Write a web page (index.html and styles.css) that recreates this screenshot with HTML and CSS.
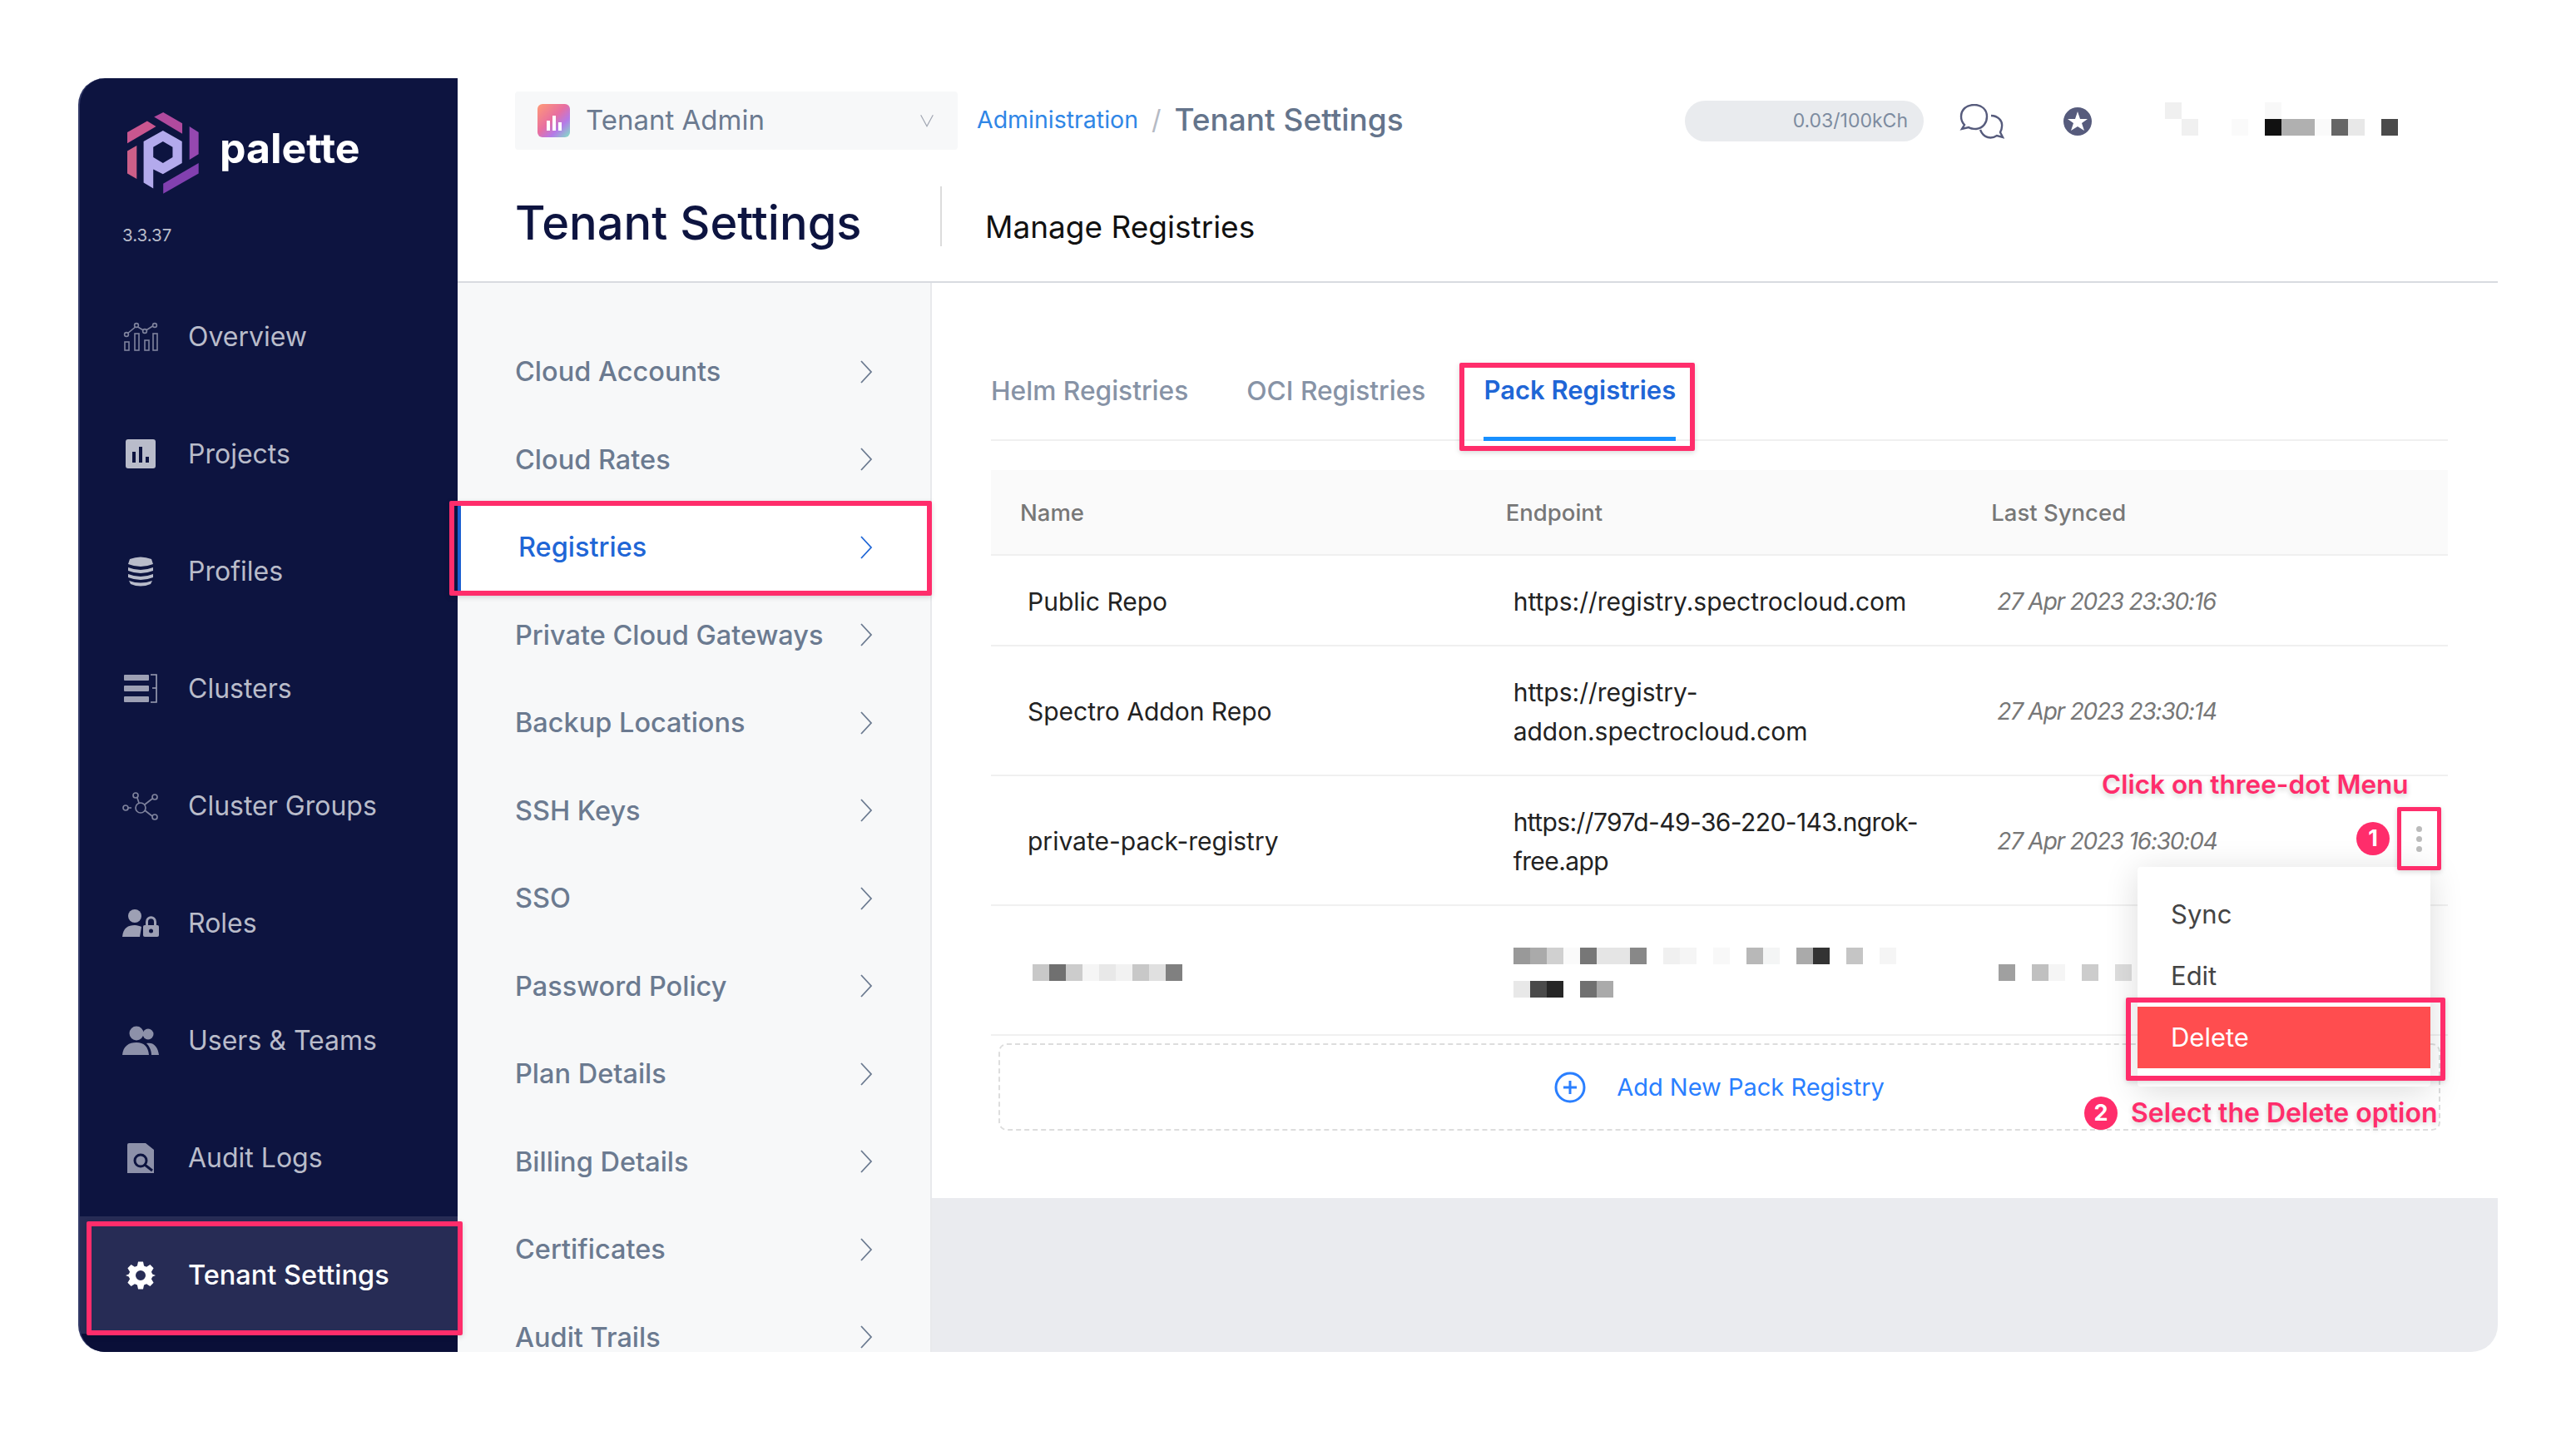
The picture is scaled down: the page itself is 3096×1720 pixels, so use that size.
FILE: index.html
```html
<!DOCTYPE html>
<html lang="en">
  <head>
    <meta charset="utf-8" />
    <title>Tenant Settings - Palette</title>
    <link rel="stylesheet" href="styles.css">
  </head>

  <body>
    <div class="frame">
      <aside class="sidebar">
        <div class="brand">
          <div class="brand-row">
            <svg class="logo" viewBox="215 135 265 265" preserveAspectRatio="none">
              <polygon fill="#b04a9e" points="315,155 348,140 417,175 417,208" />
              <polygon fill="#c9568f" points="218,203 290,168 322,185 218,238" />
              <polygon fill="#cc5f88" points="218,262 252,245 252,350 218,333" />
              <polygon fill="#9548b0" points="443,185 476,203 476,272 443,290" />
              <polygon fill="#8240b0" points="348,365 476,300 476,333 348,397" />
              <path fill="#b3aaec" fill-rule="evenodd" d="M347 198 L416 232 L416 300 L347 335 L312 320 L312 380 L277 362 L277 232 Z M347 232 L312 250 L312 282 L347 300 L382 282 L382 250 Z" />
            </svg>
            <span class="brand-name">palette</span>
          </div>
          <div class="version">3.3.37</div>
        </div>

        <nav class="side-nav">
          <a class="side-item">
            <svg class="side-icon" viewBox="0 0 44 36" fill="none" stroke="#7f839d" stroke-width="1.6">
              <path d="M6 14 L17 5 L27 11 L38 4" />
              <circle cx="5" cy="15" r="2.4" fill="#0d1440" /><circle cx="17" cy="4" r="2.4" fill="#0d1440" /><circle cx="27" cy="11" r="2.4" fill="#0d1440" /><circle cx="39" cy="4" r="2.4" fill="#0d1440" />
              <rect x="3" y="24" width="5" height="10" /><rect x="15" y="14" width="5" height="20" /><rect x="27" y="22" width="5" height="12" /><rect x="37" y="14" width="5" height="20" />
            </svg>
            <span>Overview</span>
          </a>
          <a class="side-item">
            <svg class="side-icon" viewBox="0 0 44 36">
              <rect x="4" y="0" width="36" height="35" rx="3" fill="#b9bcca" />
              <rect x="12" y="15" width="4" height="13" fill="#0d1440" /><rect x="20" y="9" width="4" height="19" fill="#0d1440" /><rect x="28" y="21" width="4" height="7" fill="#0d1440" />
            </svg>
            <span>Projects</span>
          </a>
          <a class="side-item">
            <svg class="side-icon" viewBox="0 0 44 36" fill="#b9bcca">
              <path d="M9 3 Q22 -2 35 3 L37 9 Q22 15 7 9 Z" />
              <path d="M7 13 Q22 19 37 13 L37 17 Q22 23 7 17 Z" />
              <path d="M7 21 Q22 27 37 21 L37 25 Q22 31 7 25 Z" />
              <path d="M8 29 Q22 34 36 29 L34 33 Q22 38 10 33 Z" />
            </svg>
            <span>Profiles</span>
          </a>
          <a class="side-item">
            <svg class="side-icon" viewBox="0 0 44 36">
              <rect x="2" y="1" width="30" height="7" rx="1" fill="#9da0b4" /><rect x="2" y="14" width="30" height="7" rx="1" fill="#9da0b4" /><rect x="2" y="27" width="30" height="7" rx="1" fill="#9da0b4" />
              <path d="M34 1 H41 V34 H34 M36 17 H41" fill="none" stroke="#9da0b4" stroke-width="1.6" />
            </svg>
            <span>Clusters</span>
          </a>
          <a class="side-item">
            <svg class="side-icon" viewBox="0 0 44 36" fill="none" stroke="#7f839d" stroke-width="1.7">
              <circle cx="22" cy="20" r="6" /><circle cx="4" cy="20" r="3" /><circle cx="16" cy="5" r="3" /><circle cx="39" cy="7" r="3" /><circle cx="39" cy="31" r="3" />
              <path d="M7 20 H11 M18 8 L20 14 M27 16 L36 9 M27 23 L36 30" />
            </svg>
            <span>Cluster Groups</span>
          </a>
          <a class="side-item">
            <svg class="side-icon" viewBox="0 0 44 36" fill="#9da0b4">
              <circle cx="15" cy="9" r="8" />
              <path d="M0 34 C1 23 7 20 15 20 C18 20 21 21 23 22 L21 34 Z" />
              <path d="M29.500 20 V16 C29.500 9 39.500 9 39.500 16 V20" fill="none" stroke="#9da0b4" stroke-width="3" />
              <rect x="25" y="20" width="19" height="14" rx="2" />
              <circle cx="34.500" cy="27" r="2.500" fill="#0d1440" />
            </svg>
            <span>Roles</span>
          </a>
          <a class="side-item">
            <svg class="side-icon" viewBox="0 0 44 36" fill="#8d91a9">
              <circle cx="17" cy="9" r="8.500" /><circle cx="31" cy="10" r="6.500" />
              <path d="M0 35 C1 24 8 20 17 20 C26 20 31 25 32 35 Z" />
              <path d="M35 35 C35 29 32 24 29 21 C38 19 43 26 44 35 Z" />
            </svg>
            <span>Users &amp; Teams</span>
          </a>
          <a class="side-item">
            <svg class="side-icon" viewBox="0 0 44 36">
              <path fill="#8d91a9" d="M8 0 H28 L38 8 V36 H6 V2 Q6 0 8 0 Z" />
              <circle cx="22" cy="21" r="7" fill="none" stroke="#0d1440" stroke-width="3" />
              <path d="M27 26 L36 33" stroke="#0d1440" stroke-width="3" />
            </svg>
            <span>Audit Logs</span>
          </a>
          <a class="side-item active">
            <svg class="side-icon" viewBox="0 0 24 24" fill="#fff">
              <path fill-rule="evenodd" d="M10 1 H14 L14.700 4.300 L16.700 5.200 L19.600 3.400 L22.400 6.200 L20.600 9.100 L21.500 11 L24 12 L21.500 13 L20.600 14.900 L22.400 17.800 L19.600 20.600 L16.700 18.800 L14.700 19.700 L14 23 H10 L9.300 19.700 L7.300 18.800 L4.400 20.600 L1.600 17.800 L3.400 14.900 L2.500 13 L0 12 L2.500 11 L3.400 9.100 L1.600 6.200 L4.400 3.400 L7.300 5.200 L9.300 4.300 Z M12 8 A4 4 0 1 0 12 16 A4 4 0 1 0 12 8 Z" />
            </svg>
            <span>Tenant Settings</span>
          </a>
        </nav>
        <div class="side-foot"></div>
      </aside>

      <div class="main">
        <header class="header">
          <div class="topbar">
            <div class="tenant-select">
              <span class="tenant-icon"><i></i><i></i><i></i></span>
              <span class="tenant-name">Tenant Admin</span>
              <svg class="select-arrow" viewBox="0 0 24 24" fill="none" stroke="#a0a6b2" stroke-width="1.8"><path d="M1 2 L12 22 L23 2" /></svg>
            </div>
            <div class="crumbs">
              <span class="crumb-link">Administration</span>
              <span class="crumb-sep">/</span>
              <span class="crumb-here">Tenant Settings</span>
            </div>
            <div class="top-right">
              <div class="usage">0.03/100kCh</div>
              <svg class="chat-icon" viewBox="0 0 54 42" fill="none" stroke="#565b7c" stroke-width="2.400">
                <path d="M18 1 C8 1 2 7 2 15 C2 19 4 23 6 25 L3 30 L11 28 C14 30 17 30 20 30 C29 29 33 22 33 15 C33 7 27 1 18 1 Z" />
                <path d="M38 14 C46 14 52 20 51 27 C51 30 50 32 49 34 L52 40 L45 38 C42 40 38 41 34 40 C30 39 27 36 25 31" />
              </svg>
              <svg class="star-icon" viewBox="0 0 34 34">
                <circle cx="17" cy="17" r="17" fill="#565b7c" />
                <polygon fill="#fff" points="17,5 20,14 29,14 22,19 25,28 17,23 9,28 12,19 5,14 14,14" />
              </svg>
              <svg class="mosaic-user" width="280" height="40">
                <rect x="0" y="0" width="20" height="20" fill="#f0f0f0" />
                <rect x="120" y="0" width="20" height="20" fill="#f8f8f8" />
                <rect x="20" y="20" width="20" height="20" fill="#f0f0f0" />
                <rect x="80" y="20" width="20" height="20" fill="#fafafa" />
                <rect x="120" y="20" width="20" height="20" fill="#111" />
                <rect x="140" y="20" width="40" height="20" fill="#b0b0b0" />
                <rect x="180" y="20" width="20" height="20" fill="#fafafa" />
                <rect x="200" y="20" width="20" height="20" fill="#666" />
                <rect x="220" y="20" width="20" height="20" fill="#e8e8e8" />
                <rect x="260" y="20" width="20" height="20" fill="#4a4a4a" />
              </svg>
            </div>
          </div>
          <div class="titlebar">
            <h1>Tenant Settings</h1>
            <h2>Manage Registries</h2>
          </div>
        </header>

        <div class="body">
          <nav class="sub-nav">
            <a class="sub-item">Cloud Accounts<svg class="chev" viewBox="0 0 16 28"><path d="M2 1 L14 14 L2 27" /></svg></a>
            <a class="sub-item">Cloud Rates<svg class="chev" viewBox="0 0 16 28"><path d="M2 1 L14 14 L2 27" /></svg></a>
            <a class="sub-item active">Registries<svg class="chev" viewBox="0 0 16 28"><path d="M2 1 L14 14 L2 27" /></svg></a>
            <a class="sub-item">Private Cloud Gateways<svg class="chev" viewBox="0 0 16 28"><path d="M2 1 L14 14 L2 27" /></svg></a>
            <a class="sub-item">Backup Locations<svg class="chev" viewBox="0 0 16 28"><path d="M2 1 L14 14 L2 27" /></svg></a>
            <a class="sub-item">SSH Keys<svg class="chev" viewBox="0 0 16 28"><path d="M2 1 L14 14 L2 27" /></svg></a>
            <a class="sub-item">SSO<svg class="chev" viewBox="0 0 16 28"><path d="M2 1 L14 14 L2 27" /></svg></a>
            <a class="sub-item">Password Policy<svg class="chev" viewBox="0 0 16 28"><path d="M2 1 L14 14 L2 27" /></svg></a>
            <a class="sub-item">Plan Details<svg class="chev" viewBox="0 0 16 28"><path d="M2 1 L14 14 L2 27" /></svg></a>
            <a class="sub-item">Billing Details<svg class="chev" viewBox="0 0 16 28"><path d="M2 1 L14 14 L2 27" /></svg></a>
            <a class="sub-item">Certificates<svg class="chev" viewBox="0 0 16 28"><path d="M2 1 L14 14 L2 27" /></svg></a>
            <a class="sub-item">Audit Trails<svg class="chev" viewBox="0 0 16 28"><path d="M2 1 L14 14 L2 27" /></svg></a>
          </nav>

          <div class="content">
            <section class="panel">
              <div class="tabs">
                <span class="tab">Helm Registries</span>
                <span class="tab">OCI Registries</span>
                <span class="tab active">Pack Registries</span>
              </div>

              <table class="reg-table">
                <thead>
                  <tr><th>Name</th><th>Endpoint</th><th>Last Synced</th></tr>
                </thead>
                <tbody>
                  <tr class="row-short">
                    <td>Public Repo</td>
                    <td>https://registry.spectrocloud.com</td>
                    <td class="date">27 Apr 2023 23:30:16</td>
                  </tr>
                  <tr>
                    <td>Spectro Addon Repo</td>
                    <td>https://registry-<br>addon.spectrocloud.com</td>
                    <td class="date">27 Apr 2023 23:30:14</td>
                  </tr>
                  <tr>
                    <td>private-pack-registry</td>
                    <td class="tight">https://797d-49-36-220-143.ngrok-<br>free.app</td>
                    <td class="date">27 Apr 2023 16:30:04</td>
                  </tr>
                  <tr class="row-hidden">
                    <td>
                      <svg class="mosaic mosaic-name" width="180" height="20">
                        <rect x="0" width="20" height="20" fill="#c8c8c8" /><rect x="20" width="20" height="20" fill="#707070" /><rect x="40" width="20" height="20" fill="#ccc" /><rect x="60" width="20" height="20" fill="#f5f5f5" /><rect x="80" width="20" height="20" fill="#e8e8e8" /><rect x="100" width="20" height="20" fill="#f2f2f2" /><rect x="120" width="20" height="20" fill="#c8c8c8" /><rect x="140" width="20" height="20" fill="#e0e0e0" /><rect x="160" width="20" height="20" fill="#808080" />
                      </svg>
                    </td>
                    <td>
                      <svg class="mosaic" width="460" height="60">
                        <rect x="0" width="20" height="20" fill="#999" /><rect x="20" width="20" height="20" fill="#aaa" /><rect x="40" width="20" height="20" fill="#d0d0d0" /><rect x="60" width="20" height="20" fill="#fafafa" /><rect x="80" width="20" height="20" fill="#777" /><rect x="100" width="40" height="20" fill="#e5e5e5" /><rect x="140" width="20" height="20" fill="#888" /><rect x="180" width="20" height="20" fill="#f0f0f0" /><rect x="200" width="20" height="20" fill="#f5f5f5" /><rect x="240" width="20" height="20" fill="#f8f8f8" /><rect x="280" width="20" height="20" fill="#b8b8b8" /><rect x="300" width="20" height="20" fill="#f4f5f5" /><rect x="340" width="20" height="20" fill="#aaa" /><rect x="360" width="20" height="20" fill="#333" /><rect x="400" width="20" height="20" fill="#c5c5c5" /><rect x="440" width="20" height="20" fill="#f5f5f5" />
                        <rect x="0" y="40" width="20" height="20" fill="#e8e8e8" /><rect x="20" y="40" width="20" height="20" fill="#4a4a4a" /><rect x="40" y="40" width="20" height="20" fill="#262626" /><rect x="80" y="40" width="20" height="20" fill="#707070" /><rect x="100" y="40" width="20" height="20" fill="#aaa" />
                      </svg>
                    </td>
                    <td>
                      <svg class="mosaic" width="160" height="20">
                        <rect x="0" width="20" height="20" fill="#a0a0a0" /><rect x="40" width="20" height="20" fill="#c0c0c0" /><rect x="60" width="20" height="20" fill="#f5f5f5" /><rect x="100" width="20" height="20" fill="#ccc" /><rect x="140" width="20" height="20" fill="#ddd" />
                      </svg>
                    </td>
                  </tr>
                </tbody>
              </table>

              <div class="add-box">
                <svg class="add-icon" viewBox="0 0 38 38" fill="none" stroke="#2a7fff" stroke-width="3">
                  <circle cx="19" cy="19" r="17" /><path d="M19 11 V27 M11 19 H27" />
                </svg>
                <span>Add New Pack Registry</span>
              </div>
            </section>
            <div class="content-foot"></div>
          </div>
        </div>
      </div>

      <!-- annotation layer -->
      <div class="menu">
        <div class="menu-item">Sync</div>
        <div class="menu-item">Edit</div>
        <div class="menu-item danger">Delete</div>
      </div>
      <div class="hl hl-tenant"></div>
      <div class="hl hl-registries"></div>
      <div class="hl hl-tab"></div>
      <div class="hl hl-delete"></div>
      <div class="hl hl-dots"><i></i><i></i><i></i></div>
      <div class="note note-click">Click on three-dot Menu</div>
      <div class="step step-1">1</div>
      <div class="step step-2">2</div>
      <div class="note note-select">Select the Delete option</div>
    </div>
  </body>
</html>
```

FILE: styles.css
```css
* {
  box-sizing: border-box;
}

body {
  margin: 0;
  padding: 94px;
  background-color: #fff;
  font-family: 'Inter', 'Liberation Sans', sans-serif;
  color: #222;
}

.frame {
  position: relative;
  display: flex;
  width: 2908px;
  height: 1531px;
}

/* left sidebar */
.sidebar {
  width: 456px;
  height: 100%;
  display: flex;
  flex-direction: column;
  background-color: #0d1440;
  border-left: 2px solid #333a68;
  border-radius: 32px 0 0 32px;
  overflow: hidden;
  flex-shrink: 0;
}

.brand {
  height: 240px;
  padding: 39px 0 0 51px;
}

.brand-row {
  display: flex;
  align-items: center;
  gap: 24px;
  padding-left: 5px;
}

.brand-name {
  font-size: 50px;
  font-weight: 700;
  color: #fff;
  margin-top: -12px;
}

.logo {
  width: 88px;
  height: 101px;
}

.version {
  margin-top: 36px;
  font-size: 20.500px;
  color: #b9bcca;
}

.side-item {
  height: 141px;
  display: flex;
  align-items: center;
  gap: 35px;
  padding-left: 51px;
  font-size: 32px;
  color: #b9bcca;
}

.side-item.active {
  background-color: #272c55;
  color: #fff;
  font-size: 32.500px;
  font-weight: 500;
}

.side-icon {
  width: 44px;
  height: 36px;
  flex-shrink: 0;
}

.side-foot {
  flex: 1;
  background-color: #0a0f38;
}

/* header */
.main {
  flex: 1;
  display: flex;
  flex-direction: column;
  min-width: 0;
}

.header {
  height: 246px;
  border-bottom: 2px solid #d8dbe0;
  flex-shrink: 0;
}

.topbar {
  height: 100px;
  padding: 16px 0 0 69px;
  display: flex;
  align-items: flex-start;
}

.tenant-select {
  width: 532px;
  height: 70px;
  display: flex;
  align-items: center;
  padding-left: 27px;
  background-color: #f7f8f9;
  border-radius: 4px;
}

.tenant-icon {
  width: 39px;
  height: 40px;
  display: flex;
  align-items: flex-end;
  justify-content: center;
  gap: 3px;
  padding-bottom: 8px;
  border-radius: 6px;
  background: linear-gradient(135deg, #ff9a76 0%, #e86fa0 45%, #b47ae8 70%, #7fe5c4 100%);
}

.tenant-icon i {
  width: 4px;
  height: 18px;
  background-color: #fff;
}

.tenant-icon i:first-child {
  height: 12px;
}

.tenant-icon i:last-child {
  height: 10px;
}

.tenant-name {
  margin-left: 19px;
  margin-top: -2px;
  font-size: 33px;
  color: #6b7a90;
}

.select-arrow {
  width: 24px;
  height: 16px;
  margin-left: auto;
  margin-right: 25px;
}

.crumbs {
  height: 66px;
  margin-left: 23px;
  display: flex;
  align-items: center;
}

.crumb-link {
  font-size: 28.500px;
  color: #2f86e6;
}

.crumb-sep {
  margin: 0 16px;
  font-size: 32px;
  color: #b5bac4;
}

.crumb-here {
  font-size: 37px;
  font-weight: 500;
  color: #64748b;
}

.top-right {
  position: absolute;
  left: 1931px;
  top: 27px;
  display: flex;
  align-items: center;
}

.usage {
  width: 287px;
  height: 49px;
  padding-right: 19px;
  border-radius: 25px;
  background-color: #e9ebee;
  font-size: 23px;
  line-height: 49px;
  text-align: right;
  color: #7d8ba0;
}

.chat-icon {
  width: 54px;
  height: 42px;
  margin-left: 43px;
}

.star-icon {
  width: 34px;
  height: 34px;
  margin-left: 71px;
}

.mosaic-user {
  margin: -6px 0 0 88px;
}

.titlebar {
  display: flex;
  align-items: center;
  padding-left: 69px;
  height: 72px;
  margin-top: 30px;
}

h1 {
  margin: 16px 0 0;
  width: 511px;
  font-size: 56px;
  font-weight: 500;
  color: #0d1440;
}

h2 {
  margin: 0;
  padding: 24px 0 0 52px;
  height: 100%;
  display: flex;
  align-items: center;
  border-left: 2px solid #dcdcdc;
  font-size: 37px;
  font-weight: 400;
  color: #111;
}

/* settings sub nav */
.body {
  flex: 1;
  display: flex;
  min-height: 0;
}

.sub-nav {
  width: 570px;
  flex-shrink: 0;
  padding-top: 54px;
  background-color: #f7f8f9;
  border-right: 2px solid #e8e9ec;
  overflow: hidden;
}

.sub-item {
  height: 105.500px;
  display: flex;
  align-items: center;
  justify-content: space-between;
  padding: 0 69px 0 69px;
  font-size: 32.500px;
  font-weight: 500;
  color: #6b7a90;
}

.sub-item.active {
  padding-left: 69px;
  background-color: #fff;
  border-left: 4px solid #1b5fd0;
  color: #1f66d6;
}

.chev {
  width: 16px;
  height: 28px;
  fill: none;
  stroke: #6b7a90;
  stroke-width: 1.8;
  flex-shrink: 0;
}

.sub-item.active .chev {
  stroke: #1f66d6;
}

/* registries panel */
.content {
  flex: 1;
  display: flex;
  flex-direction: column;
  min-width: 0;
}

.panel {
  height: 1100px;
  padding: 0 60px 0 71px;
  background-color: #fff;
}

.content-foot {
  flex: 1;
  background-color: #eaebef;
  border-bottom-right-radius: 32px;
}

.tabs {
  height: 190px;
  display: flex;
  gap: 70px;
  align-items: flex-end;
  border-bottom: 2px solid #f0f0f0;
}

.tab {
  height: 78px;
  font-size: 31.700px;
  font-weight: 500;
  color: #8793a6;
}

.tab.active {
  height: 80px;
  margin-bottom: -2px;
  border-bottom: 5px solid #1890ff;
  color: #1f66d6;
  font-size: 31px;
  font-weight: 600;
}

.reg-table {
  width: 100%;
  margin-top: 35px;
  border-collapse: collapse;
  table-layout: fixed;
  font-size: 30px;
}

.reg-table th {
  height: 102px;
  padding-left: 35px;
  background-color: #fafafa;
  border-bottom: 2px solid #f0f0f0;
  font-size: 27.500px;
  font-weight: 500;
  text-align: left;
  color: #777;
}

.reg-table td {
  height: 156px;
  padding: 3px 0 0 44px;
  border-bottom: 2px solid #f0f0f0;
  line-height: 47px;
  color: #222;
}

.reg-table .row-short td {
  height: 109px;
}

.reg-table td.date {
  padding-left: 42px;
  font-size: 28px;
  font-style: italic;
  letter-spacing: -1.200px;
  color: #777;
}

.reg-table td.tight {
  letter-spacing: -0.600px;
}

.row-hidden .mosaic {
  margin-top: 3px;
}

.mosaic {
  display: block;
}

.row-hidden .mosaic-name {
  margin-left: 6px;
}

.add-box {
  height: 105px;
  margin: 9px 9px 0;
  display: flex;
  align-items: center;
  justify-content: center;
  gap: 37px;
  border: 2px dashed #ddd;
  border-radius: 10px;
  font-size: 29px;
  color: #2a7fff;
}

.add-icon {
  width: 38px;
  height: 38px;
}

/* annotations on top of the page */
.menu {
  position: absolute;
  left: 2475px;
  top: 948px;
  width: 352px;
  height: 264px;
  padding-top: 20px;
  background-color: #fff;
  border-radius: 4px;
  box-shadow: 0 6px 40px rgba(0,0,0,0.14);
}

.menu-item {
  height: 74px;
  padding-left: 40px;
  font-size: 31px;
  line-height: 74px;
  color: #444;
}

.menu-item.danger {
  background-color: #ff4d4f;
  color: #fff;
}

.hl {
  position: absolute;
  border: 6px solid #ff2d6b;
  border-radius: 2px;
  box-shadow: 0 2px 6px rgba(0,0,0,0.15);
}

.hl-tenant {
  left: 10px;
  top: 1374px;
  width: 452px;
  height: 137px;
}

.hl-registries {
  left: 446px;
  top: 508px;
  width: 580px;
  height: 114px;
}

.hl-tab {
  left: 1660px;
  top: 342px;
  width: 283px;
  height: 106px;
}

.hl-delete {
  left: 2461px;
  top: 1105px;
  width: 384px;
  height: 100px;
}

.hl-dots {
  left: 2787px;
  top: 876px;
  width: 53px;
  height: 76px;
  border-width: 5px;
  display: flex;
  flex-direction: column;
  align-items: center;
  justify-content: center;
  gap: 5px;
}

.hl-dots i {
  width: 7px;
  height: 7px;
  border-radius: 50%;
  background-color: #bbb;
}

.note {
  position: absolute;
  font-weight: 600;
  color: #ff2d6b;
  text-shadow: 0 3px 6px rgba(0,0,0,0.18);
  white-space: nowrap;
}

.note-click {
  left: 2432px;
  top: 829px;
  font-size: 31.500px;
}

.note-select {
  left: 2467px;
  top: 1224px;
  font-size: 32px;
}

.step {
  position: absolute;
  width: 40px;
  height: 40px;
  border-radius: 50%;
  background-color: #ff2d6b;
  color: #fff;
  font-size: 27px;
  font-weight: 700;
  line-height: 40px;
  text-align: center;
}

.step-1 {
  left: 2738px;
  top: 894px;
}

.step-2 {
  left: 2411px;
  top: 1224px;
}
```
